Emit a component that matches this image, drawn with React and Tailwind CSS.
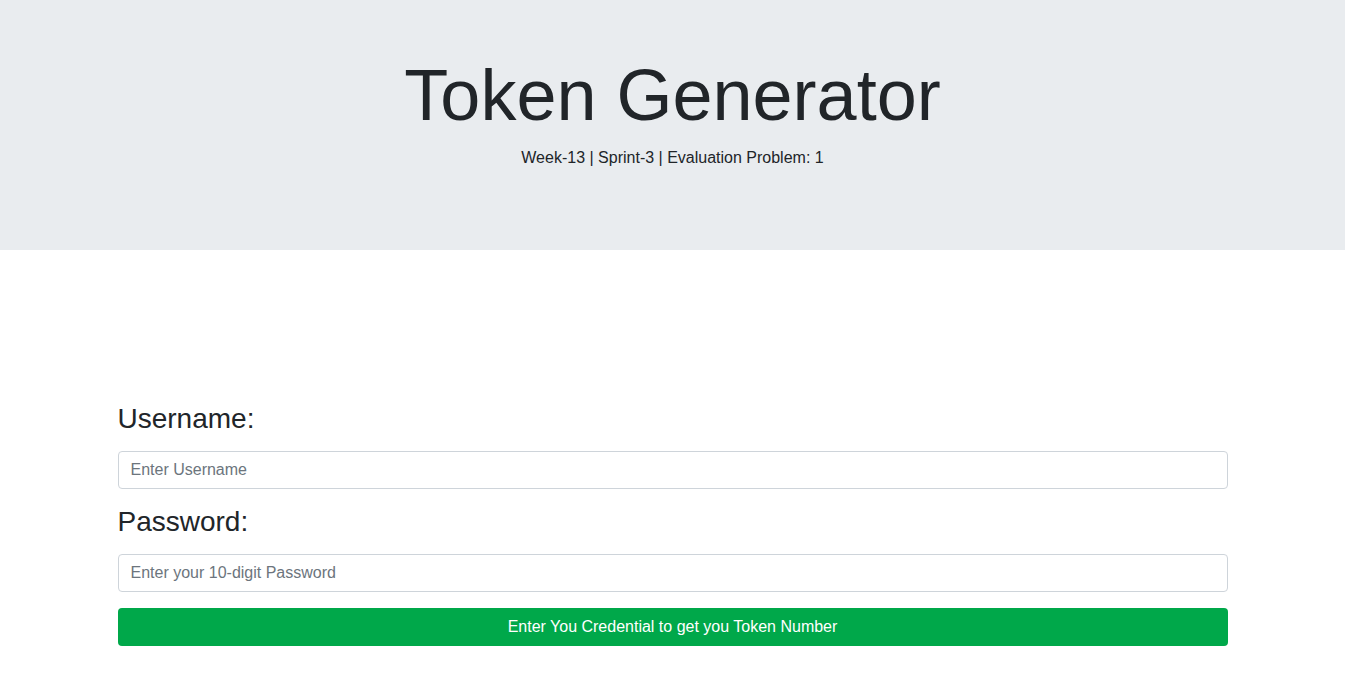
export default function App() {
  return (
    <div className="min-h-screen bg-white text-[#212529] font-['Liberation_Sans',Arial,sans-serif]">
      <header className="h-[250px] bg-[#e9ecef] pt-[52px] text-center">
        <h1 className="text-[72px] leading-[1.2] font-normal">Token Generator</h1>
        <p className="mt-2 text-base leading-6">Week-13 | Sprint-3 | Evaluation Problem: 1</p>
      </header>

      <section className="mx-auto w-[1140px] px-[15px] pt-[152px]">
        <form onSubmit={(e) => e.preventDefault()}>
          <label className="block text-[28px] leading-[1.2] mb-[15px]">Username:</label>
          <input
            type="text"
            placeholder="Enter Username"
            className="block w-full h-[38px] px-3 text-base border border-[#ced4da] rounded placeholder:text-[#6c757d] outline-none"
          />
          <label className="block text-[28px] leading-[1.2] mt-4 mb-4">Password:</label>
          <input
            type="password"
            placeholder="Enter your 10-digit Password"
            className="block w-full h-[38px] px-3 text-base border border-[#ced4da] rounded placeholder:text-[#6c757d] outline-none"
          />
          <button
            type="submit"
            className="mt-4 block w-full h-[38px] bg-[#00a84a] text-white text-base rounded"
          >
            Enter You Credential to get you Token Number
          </button>
        </form>
      </section>
    </div>
  );
}
